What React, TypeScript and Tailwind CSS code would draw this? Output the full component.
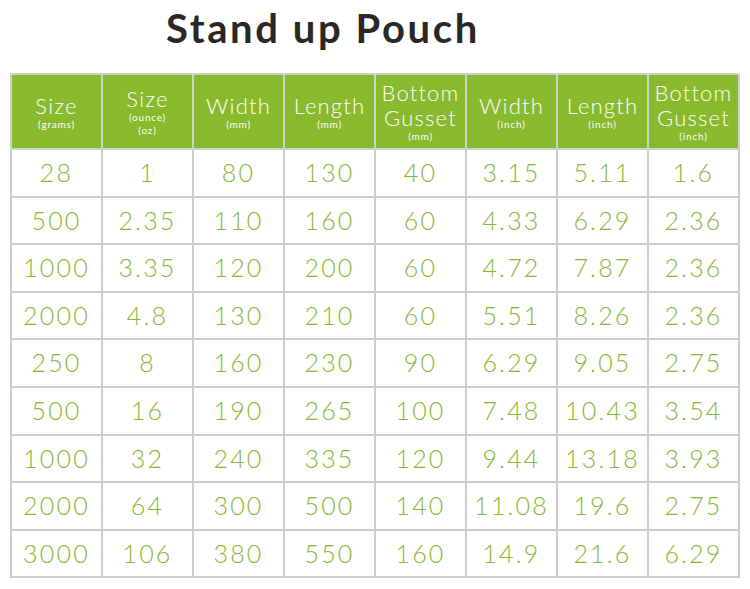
import React from 'react';

const headers = [
  { title: ['Size'], unit: ['(grams)'] },
  { title: ['Size'], unit: ['(ounce)', '(oz)'] },
  { title: ['Width'], unit: ['(mm)'] },
  { title: ['Length'], unit: ['(mm)'] },
  { title: ['Bottom', 'Gusset'], unit: ['(mm)'] },
  { title: ['Width'], unit: ['(inch)'] },
  { title: ['Length'], unit: ['(inch)'] },
  { title: ['Bottom', 'Gusset'], unit: ['(inch)'] },
];

const rows = [
  ['28', '1', '80', '130', '40', '3.15', '5.11', '1.6'],
  ['500', '2.35', '110', '160', '60', '4.33', '6.29', '2.36'],
  ['1000', '3.35', '120', '200', '60', '4.72', '7.87', '2.36'],
  ['2000', '4.8', '130', '210', '60', '5.51', '8.26', '2.36'],
  ['250', '8', '160', '230', '90', '6.29', '9.05', '2.75'],
  ['500', '16', '190', '265', '100', '7.48', '10.43', '3.54'],
  ['1000', '32', '240', '335', '120', '9.44', '13.18', '3.93'],
  ['2000', '64', '300', '500', '140', '11.08', '19.6', '2.75'],
  ['3000', '106', '380', '550', '160', '14.9', '21.6', '6.29'],
];

export default function App() {
  return (
    <div className="w-[750px] h-[589px] bg-white font-['Lato','Noto_Sans',sans-serif]">
      <div className="h-[73px] pl-[166px] pt-[4px]">
        <h1 className="text-[40px] leading-[48px] font-bold tracking-[2.6px] text-[#2b2727]">Stand up Pouch</h1>
      </div>
      <div className="pl-[10px]">
        <table className="border-collapse table-fixed w-[730px]">
          <thead>
            <tr className="h-[75px] bg-[#89b92c]">
              {headers.map((h, i) => (
                <th key={i} className="w-[91px] border-2 border-[#cfd5c4] p-0 font-normal text-white align-middle">
                  {h.title.map(t => (
                    <div key={t} className="text-[22px] leading-[25px] tracking-[1.2px] font-light">{t}</div>
                  ))}
                  {h.unit.map(u => (
                    <div key={u} className="text-[10px] leading-[13px] tracking-[0.8px]">{u}</div>
                  ))}
                </th>
              ))}
            </tr>
          </thead>
          <tbody>
            {rows.map((r, i) => (
              <tr key={i} className="h-[47.6px]">
                {r.map((c, j) => (
                  <td key={j} className="border-2 border-[#cdcdcd] p-0 text-center text-[25px] font-light tracking-[2.2px] text-[#86b733]">
                    {c}
                  </td>
                ))}
              </tr>
            ))}
          </tbody>
        </table>
      </div>
    </div>
  );
}
